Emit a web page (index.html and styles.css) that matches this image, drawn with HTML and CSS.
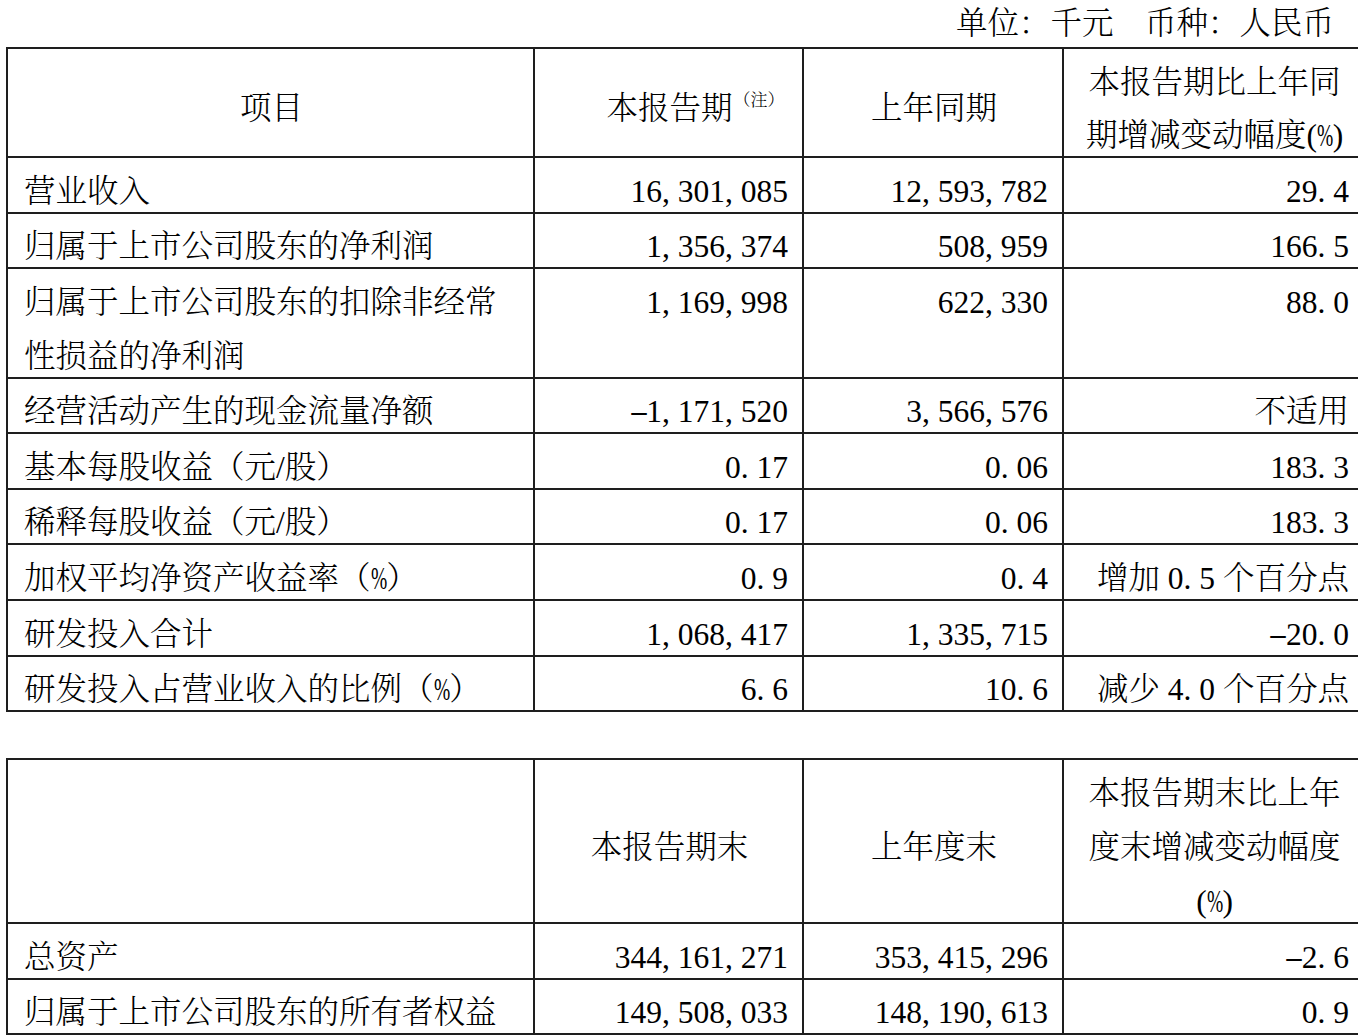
FILE: index.html
```html
<!DOCTYPE html>
<html lang="zh-CN">
<head>
<meta charset="utf-8">
<title>主要财务数据</title>
<link rel="stylesheet" href="styles.css">
</head>
<body>
<div class="page">
  <div class="unit">单位：千元　币种：人民币</div>

  <table class="tbl">
    <colgroup><col class="c1"><col class="c2"><col class="c3"><col class="c4"></colgroup>
    <thead>
      <tr>
        <th class="mid"><div class="t">项目</div></th>
        <th class="mid"><div class="t">本报告期<sup class="note">（注）</sup></div></th>
        <th class="mid"><div class="t">上年同期</div></th>
        <th class="ctr"><div class="t">本报告期比上年同<br>期增减变动幅度(<span class="pc">%</span>)</div></th>
      </tr>
    </thead>
    <tbody>
      <tr>
        <td><div class="t">营业收入</div></td>
        <td class="num"><div class="t">16<span class="p">,</span>301<span class="p">,</span>085</div></td>
        <td class="num"><div class="t">12<span class="p">,</span>593<span class="p">,</span>782</div></td>
        <td class="num"><div class="t">29<span class="p">.</span>4</div></td>
      </tr>
      <tr>
        <td><div class="t">归属于上市公司股东的净利润</div></td>
        <td class="num"><div class="t">1<span class="p">,</span>356<span class="p">,</span>374</div></td>
        <td class="num"><div class="t">508<span class="p">,</span>959</div></td>
        <td class="num"><div class="t">166<span class="p">.</span>5</div></td>
      </tr>
      <tr>
        <td><div class="t">归属于上市公司股东的扣除非经常性损益的净利润</div></td>
        <td class="num"><div class="t">1<span class="p">,</span>169<span class="p">,</span>998</div></td>
        <td class="num"><div class="t">622<span class="p">,</span>330</div></td>
        <td class="num"><div class="t">88<span class="p">.</span>0</div></td>
      </tr>
      <tr>
        <td><div class="t">经营活动产生的现金流量净额</div></td>
        <td class="num"><div class="t"><span class="m">-</span>1<span class="p">,</span>171<span class="p">,</span>520</div></td>
        <td class="num"><div class="t">3<span class="p">,</span>566<span class="p">,</span>576</div></td>
        <td class="num"><div class="t">不适用</div></td>
      </tr>
      <tr>
        <td><div class="t">基本每股收益（元/股）</div></td>
        <td class="num"><div class="t">0<span class="p">.</span>17</div></td>
        <td class="num"><div class="t">0<span class="p">.</span>06</div></td>
        <td class="num"><div class="t">183<span class="p">.</span>3</div></td>
      </tr>
      <tr>
        <td><div class="t">稀释每股收益（元/股）</div></td>
        <td class="num"><div class="t">0<span class="p">.</span>17</div></td>
        <td class="num"><div class="t">0<span class="p">.</span>06</div></td>
        <td class="num"><div class="t">183<span class="p">.</span>3</div></td>
      </tr>
      <tr>
        <td><div class="t">加权平均净资产收益率（<span class="pc">%</span>）</div></td>
        <td class="num"><div class="t">0<span class="p">.</span>9</div></td>
        <td class="num"><div class="t">0<span class="p">.</span>4</div></td>
        <td class="num"><div class="t">增加 0<span class="p">.</span>5 个百分点</div></td>
      </tr>
      <tr>
        <td><div class="t">研发投入合计</div></td>
        <td class="num"><div class="t">1<span class="p">,</span>068<span class="p">,</span>417</div></td>
        <td class="num"><div class="t">1<span class="p">,</span>335<span class="p">,</span>715</div></td>
        <td class="num"><div class="t"><span class="m">-</span>20<span class="p">.</span>0</div></td>
      </tr>
      <tr>
        <td><div class="t">研发投入占营业收入的比例（<span class="pc">%</span>）</div></td>
        <td class="num"><div class="t">6<span class="p">.</span>6</div></td>
        <td class="num"><div class="t">10<span class="p">.</span>6</div></td>
        <td class="num"><div class="t">减少 4<span class="p">.</span>0 个百分点</div></td>
      </tr>
    </tbody>
  </table>

  <table class="tbl t2">
    <colgroup><col class="c1"><col class="c2"><col class="c3"><col class="c4"></colgroup>
    <thead>
      <tr>
        <th class="mid"><div class="t"></div></th>
        <th class="mid"><div class="t">本报告期末</div></th>
        <th class="mid"><div class="t">上年度末</div></th>
        <th class="ctr tall"><div class="t">本报告期末比上年<br>度末增减变动幅度<br>(<span class="pc">%</span>)</div></th>
      </tr>
    </thead>
    <tbody>
      <tr>
        <td><div class="t">总资产</div></td>
        <td class="num"><div class="t">344<span class="p">,</span>161<span class="p">,</span>271</div></td>
        <td class="num"><div class="t">353<span class="p">,</span>415<span class="p">,</span>296</div></td>
        <td class="num"><div class="t"><span class="m">-</span>2<span class="p">.</span>6</div></td>
      </tr>
      <tr>
        <td><div class="t">归属于上市公司股东的所有者权益</div></td>
        <td class="num"><div class="t">149<span class="p">,</span>508<span class="p">,</span>033</div></td>
        <td class="num"><div class="t">148<span class="p">,</span>190<span class="p">,</span>613</div></td>
        <td class="num"><div class="t">0<span class="p">.</span>9</div></td>
      </tr>
    </tbody>
  </table>
</div>
</body>
</html>
```

FILE: styles.css
```css
html, body {
  margin: 0;
  padding: 0;
  overflow: hidden;
  background: #fff;
}

body {
  font-family: "Liberation Serif", "Noto Serif CJK SC", "Noto Sans CJK SC", serif;
  font-size: 31.5px;
  font-weight: 300;
  color: #000;
}

.page {
  padding-left: 6px;
}

.unit {
  line-height: 47px;
  text-align: right;
  padding-right: 24px;
  white-space: nowrap;
}

.tbl {
  border-collapse: collapse;
  table-layout: fixed;
  width: 1357px;
}

.tbl .c1 { width: 527px; }
.tbl .c2 { width: 269px; }
.tbl .c3 { width: 260px; }
.tbl .c4 { width: 301px; }

.tbl th,
.tbl td {
  border: 2px solid #1e1e1e;
  padding: 0 14px 0 16px;
  font-weight: 300;
  vertical-align: top;
  text-align: left;
  line-height: 53.6px;
}

.t {
  padding-top: 6.6px;
  margin-bottom: -6.6px;
}

.tbl .mid {
  vertical-align: middle;
  text-align: center;
}

.tbl .ctr {
  text-align: center;
}

.tbl .num {
  text-align: right;
  white-space: nowrap;
}

.t2 {
  margin-top: 46px;
}

.t2 .tall {
  line-height: 54px;
}

.note {
  font-size: 17px;
  line-height: 0;
  vertical-align: 13px;
  margin-left: 1px;
  margin-right: -52px;
}

.p {
  display: inline-block;
  width: 0.5em;
  text-align: left;
}

.m {
  display: inline-block;
  width: 0.5em;
  text-align: center;
  transform: scaleX(1.9) scaleY(0.8);
}

.pc {
  display: inline-block;
  width: 0.5em;
  transform: scaleX(0.62);
  transform-origin: 0 50%;
}
```
